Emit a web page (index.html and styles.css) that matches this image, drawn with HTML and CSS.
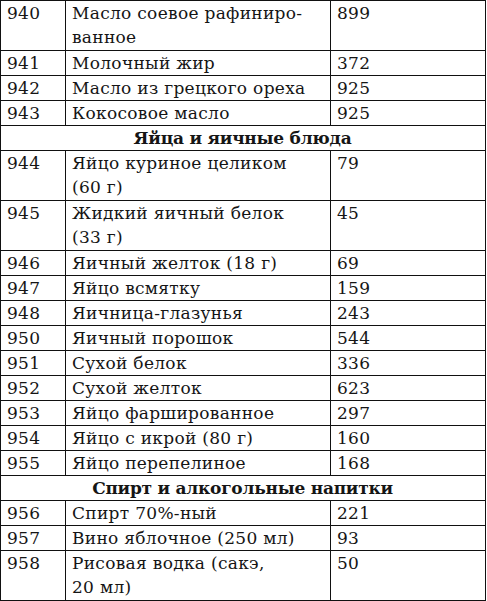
FILE: index.html
```html
<!DOCTYPE html>
<html lang="ru">
<head>
<meta charset="utf-8">
<title>Калорийность</title>
<link rel="stylesheet" href="styles.css">
</head>
<body>
<table class="cal">
  <colgroup><col class="c-num"><col class="c-name"><col class="c-val"></colgroup>
  <tbody>
    <tr class="two"><td>940</td><td>Масло соевое рафиниро-<br>ванное</td><td>899</td></tr>
    <tr><td>941</td><td>Молочный жир</td><td>372</td></tr>
    <tr><td>942</td><td>Масло из грецкого ореха</td><td>925</td></tr>
    <tr><td>943</td><td>Кокосовое масло</td><td>925</td></tr>
    <tr class="section"><td colspan="3">Яйца и яичные блюда</td></tr>
    <tr class="two"><td>944</td><td>Яйцо куриное целиком<br>(60 г)</td><td>79</td></tr>
    <tr class="two"><td>945</td><td>Жидкий яичный белок<br>(33 г)</td><td>45</td></tr>
    <tr><td>946</td><td>Яичный желток (18 г)</td><td>69</td></tr>
    <tr><td>947</td><td>Яйцо всмятку</td><td>159</td></tr>
    <tr><td>948</td><td>Яичница-глазунья</td><td>243</td></tr>
    <tr><td>950</td><td>Яичный порошок</td><td>544</td></tr>
    <tr><td>951</td><td>Сухой белок</td><td>336</td></tr>
    <tr><td>952</td><td>Сухой желток</td><td>623</td></tr>
    <tr><td>953</td><td>Яйцо фаршированное</td><td>297</td></tr>
    <tr><td>954</td><td>Яйцо с икрой (80 г)</td><td>160</td></tr>
    <tr><td>955</td><td>Яйцо перепелиное</td><td>168</td></tr>
    <tr class="section"><td colspan="3">Спирт и алкогольные напитки</td></tr>
    <tr><td>956</td><td>Спирт 70%-ный</td><td>221</td></tr>
    <tr><td>957</td><td>Вино яблочное (250 мл)</td><td>93</td></tr>
    <tr class="two"><td>958</td><td>Рисовая водка (сакэ,<br>20 мл)</td><td>50</td></tr>
  </tbody>
</table>
</body>
</html>
```

FILE: styles.css
```css
html, body {
  margin: 0;
  padding: 0;
  background: #fff;
}

.cal {
  border-collapse: separate;
  border-spacing: 0;
  table-layout: fixed;
  width: 486px;
  border-right: 1px solid #111;
  border-bottom: 1px solid #111;
  font-family: "DejaVu Serif", "Liberation Serif", serif;
  font-size: 17px;
  letter-spacing: 0.3px;
  color: #151515;
}

.c-num { width: 65px; }
.c-name { width: 265px; }
.c-val { width: 155px; }

.cal td {
  padding: 1px 0 0 7px;
  line-height: 24px;
  vertical-align: top;
  box-shadow: inset 1px 1px 0 #111;
  white-space: nowrap;
}

.cal .two td {
  padding-bottom: 1px;
}

.cal .section td {
  text-align: center;
  font-weight: bold;
  letter-spacing: -0.25px;
  padding-left: 0;
}
```
